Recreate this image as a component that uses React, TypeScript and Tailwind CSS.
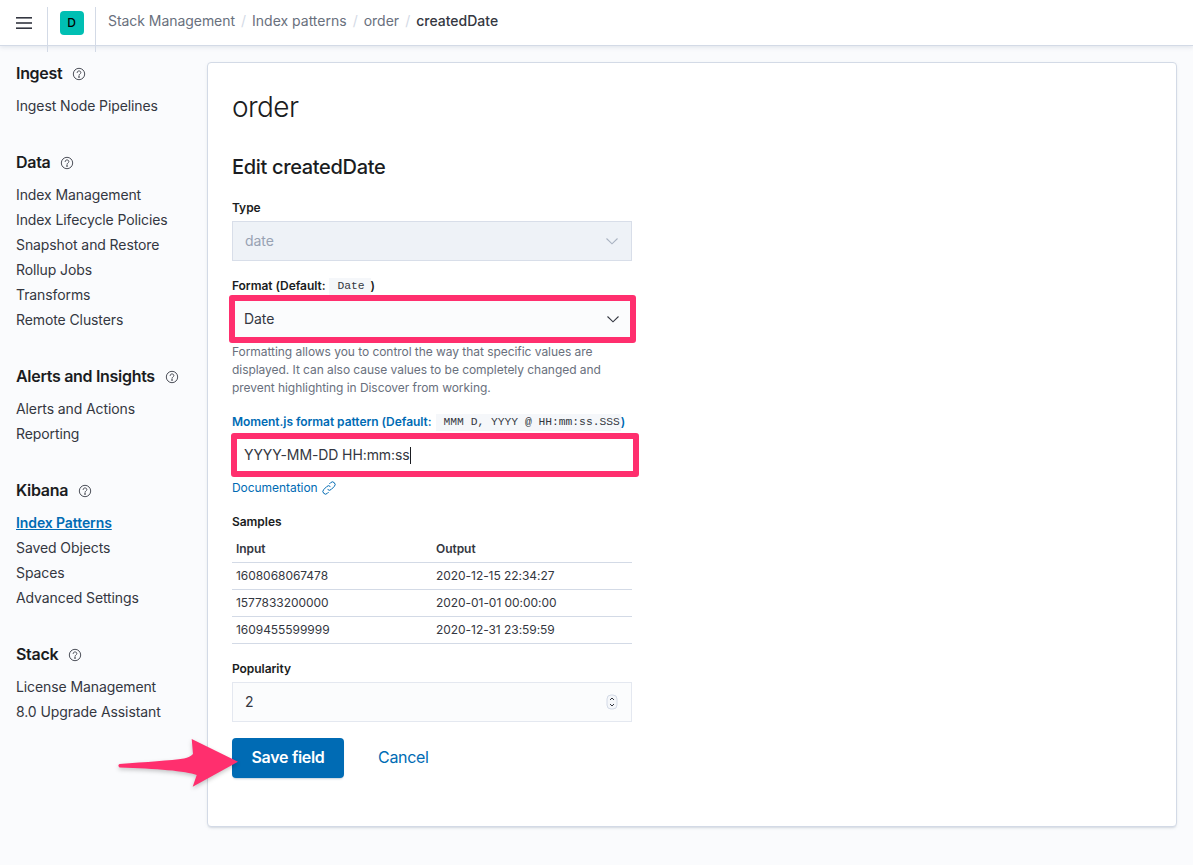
import React from "react";

const Help = () => (
  <svg width="14" height="14" viewBox="0 0 16 16" fill="none" stroke="#343741" strokeWidth="1" className="ml-[10px] mt-[2px]">
    <circle cx="8" cy="8" r="6.5" />
    <path d="M5.9 6.3C6 5.1 6.9 4.5 8 4.5c1.2 0 2.1.7 2.1 1.8 0 1.7-2.1 1.6-2.1 3.2" strokeLinecap="round" />
    <circle cx="8" cy="11.4" r="0.5" fill="#343741" />
  </svg>
);

const Chevron = ({ color }: { color: string }) => (
  <svg width="16" height="16" viewBox="0 0 16 16" fill="none" stroke={color} strokeWidth="1.1">
    <path d="M2.5 5.5 8 10.8l5.5-5.3" />
  </svg>
);

const groups: { title: string; items: string[] }[] = [
  { title: "Ingest", items: ["Ingest Node Pipelines"] },
  { title: "Data", items: ["Index Management", "Index Lifecycle Policies", "Snapshot and Restore", "Rollup Jobs", "Transforms", "Remote Clusters"] },
  { title: "Alerts and Insights", items: ["Alerts and Actions", "Reporting"] },
  { title: "Kibana", items: ["Index Patterns", "Saved Objects", "Spaces", "Advanced Settings"] },
  { title: "Stack", items: ["License Management", "8.0 Upgrade Assistant"] },
];

const samples = [
  ["1608068067478", "2020-12-15 22:34:27"],
  ["1577833200000", "2020-01-01 00:00:00"],
  ["1609455599999", "2020-12-31 23:59:59"],
];

export default function App() {
  return (
    <div className="min-h-[865px] bg-[#fafbfd] text-[#343741] font-['Inter',sans-serif] overflow-hidden">
      <header className="h-[46px] bg-white flex items-center border-b border-[#d3dae6] shadow-[0_2px_4px_rgba(152,162,179,0.2)] relative z-10">
        <div className="w-[48px] h-full flex items-center justify-center border-r border-[#d3dae6] mt-[13px] pb-[13px]">
          <svg width="16" height="12" viewBox="0 0 16 12" fill="#343741">
            <rect y="0" width="16" height="1.6" />
            <rect y="5.2" width="16" height="1.6" />
            <rect y="10.4" width="16" height="1.6" />
          </svg>
        </div>
        <div className="w-[48px] h-full flex items-center justify-center border-r border-[#d3dae6] mt-[13px] pb-[13px]">
          <div className="w-6 h-6 rounded bg-[#00bfb3] flex items-center justify-center text-[12px] font-medium text-black">D</div>
        </div>
        <nav className="ml-3 flex items-center text-[14px] text-[#69707d] mb-[5px]">
          <span className="tracking-[-0.05px]">Stack Management</span>
          <span className="mx-[6px] text-[#d3dae6]">/</span>
          <span>Index patterns</span>
          <span className="mx-[6px] text-[#d3dae6]">/</span>
          <span>order</span>
          <span className="mx-[6px] text-[#d3dae6]">/</span>
          <span className="text-[#343741] font-medium">createdDate</span>
        </nav>
      </header>

      <div className="flex items-start pt-[16px] pl-4 pr-4">
        <aside className="w-[191px] shrink-0 flex flex-col gap-[33px]">
          {groups.map((g) => (
            <div key={g.title}>
              <div className="h-6 flex items-center pb-[2px] text-[16px] font-semibold text-[#1a1c21] tracking-[-0.3px]">
                {g.title}
                <Help />
              </div>
              <ul className="mt-[7px] tracking-[-0.1px]">
                {g.items.map((it) => (
                  <li
                    key={it}
                    className={
                      it === "Index Patterns"
                        ? "h-[25px] leading-[25px] text-[14px] font-semibold text-[#006bb4] underline"
                        : "h-[25px] leading-[25px] text-[14px] text-[#343741]"
                    }
                  >
                    {it}
                  </li>
                ))}
              </ul>
            </div>
          ))}
        </aside>

        <main className="relative w-[970px] h-[765px] bg-white border border-[#d3dae6] rounded-[4px] shadow-[0_2px_2px_-1px_rgba(152,162,179,0.3),0_1px_5px_-2px_rgba(152,162,179,0.3)] pl-6 pt-6">
          <h1 className="text-[28px] leading-[40px] font-light text-[#1a1c21] tracking-[-0.6px]">order</h1>
          <h2 className="mt-[24px] text-[20px] leading-[32px] font-medium text-[#1a1c21] tracking-[-0.33px]">Edit createdDate</h2>

          <form className="w-[400px] mt-[16px] tracking-[-0.05px]">
            <div className="text-[12px] leading-[18px] font-semibold text-[#1a1c21]">Type</div>
            <div className="mt-1 h-10 bg-[#eef2f7] border border-[#d8dee9] flex items-center justify-between pl-3 pr-[11px] text-[14px] text-[#98a2b3]">
              <span className="mb-[2px]">date</span>
              <Chevron color="#a9b2c1" />
            </div>

            <div className="mt-[16px] h-[18px] flex items-center text-[12px] font-semibold text-[#1a1c21]">
              Format (Default:
              <code className="ml-1 pl-2 pr-[6px] h-[17px] leading-[17px] bg-[#f5f7fa] font-['Liberation_Mono',monospace] text-[11.3px] tracking-normal font-normal text-[#343741]">Date</code>
              <span>)</span>
            </div>
            <div className="relative mt-[6px] h-9 bg-[#fbfcfd] flex items-center justify-between pl-3 pr-[11px] text-[14px] text-[#343741]">
              <span className="mb-[2px]">Date</span>
              <Chevron color="#343741" />
              <div className="absolute -left-[3px] -right-[4px] -top-[6px] -bottom-[6px] border-[6px] border-[#ff2f6e] rounded-[3px]" />
            </div>
            <p className="mt-[6px] text-[12px] leading-[18px] text-[#69707d]">
              Formatting allows you to control the way that specific values are displayed. It can also cause values to be completely changed and prevent highlighting in Discover from working.
            </p>

            <div className="mt-[16px] h-[18px] flex items-center text-[12px] font-semibold text-[#006bb4] whitespace-nowrap">
              Moment.js format pattern (Default:
              <code className="ml-1 pl-2 pr-[1px] h-[17px] leading-[17px] bg-[#f5f7fa] font-['Liberation_Mono',monospace] text-[11.3px] tracking-normal font-normal text-[#343741]">MMM D, YYYY @ HH:mm:ss.SSS</code>
              <span>)</span>
            </div>
            <div className="relative mt-[6px] h-9 bg-white flex items-center pl-3 text-[14px] text-[#343741] tracking-[-0.1px]">
              <span className="mb-[2px]">YYYY-MM-DD HH:mm:ss</span>
              <span className="w-px h-[17px] bg-[#1a1c21]" />
              <div className="absolute -left-[1px] -right-[7px] -top-[4px] -bottom-[4px] border-[6px] border-[#ff2f6e] rounded-[3px]" />
            </div>
            <div className="mt-[6px] h-[18px] flex items-center text-[12px] text-[#006bb4]">
              Documentation
              <svg width="16" height="16" viewBox="0 0 16 16" fill="none" stroke="#006bb4" strokeWidth="1" className="ml-[3px]">
                <path d="M6.6 9.4a2.6 2.6 0 0 0 3.7 0l3-3a2.6 2.6 0 0 0-3.7-3.7l-1.2 1.2" />
                <path d="M9.4 6.6a2.6 2.6 0 0 0-3.7 0l-3 3a2.6 2.6 0 0 0 3.7 3.7l1.2-1.2" />
              </svg>
            </div>

            <div className="mt-[16px] text-[12px] leading-[18px] font-semibold text-[#1a1c21]">Samples</div>
            <div className="mt-[5px] text-[12px] text-[#343741]">
              <div className="flex h-[27px] items-center border-b border-[#d3dae6] font-semibold">
                <div className="w-[200px] pl-1">Input</div>
                <div className="pl-1">Output</div>
              </div>
              {samples.map((r) => (
                <div key={r[0]} className="flex h-[27px] items-center border-b border-[#d3dae6]">
                  <div className="w-[200px] pl-1">{r[0]}</div>
                  <div className="pl-1">{r[1]}</div>
                </div>
              ))}
            </div>

            <div className="mt-4 text-[12px] leading-[18px] font-semibold text-[#1a1c21]">Popularity</div>
            <div className="mt-1 h-10 bg-[#fbfcfd] border border-[#e4e8f0] flex items-center justify-between pl-3 pr-[13px] text-[14px] text-[#343741]">
              <span className="mb-[2px]">2</span>
              <svg width="12" height="16" viewBox="0 0 12 16" fill="none" stroke="#343741" strokeWidth="1">
                <rect x="1" y="1" width="10" height="14" rx="4" stroke="#d3dae6" fill="#f5f7fa" />
                <path d="M4 6l2-2 2 2M4 10l2 2 2-2" />
              </svg>
            </div>

            <div className="mt-4 flex items-center">
              <div className="w-[112px] h-10 pb-[2px] bg-[#006bb4] rounded-[4px] flex items-center justify-center text-[16px] font-semibold text-white tracking-[-0.3px] shadow-[0_2px_2px_-1px_rgba(54,97,126,0.3)]">Save field</div>
              <div className="ml-[34px] pb-[2px] text-[16px] text-[#006bb4] tracking-[-0.3px]">Cancel</div>
            </div>
          </form>

          <svg width="130" height="80" viewBox="0 0 130 80" className="absolute left-[-92px] top-[673px]" style={{ filter: "drop-shadow(0 2px 2px rgba(0,0,0,0.22))" }}>
            <path d="M3.500 28C30 26 55 24.500 68 22.500 72 22 75 20 77 18L75.700 3 122 25.700 76.700 50.700 80.700 39C70 35 40 32.500 3.500 31.500 2 30 2 29 3.500 28Z" fill="#ff2f6e" />
          </svg>
        </main>
      </div>
    </div>
  );
}
